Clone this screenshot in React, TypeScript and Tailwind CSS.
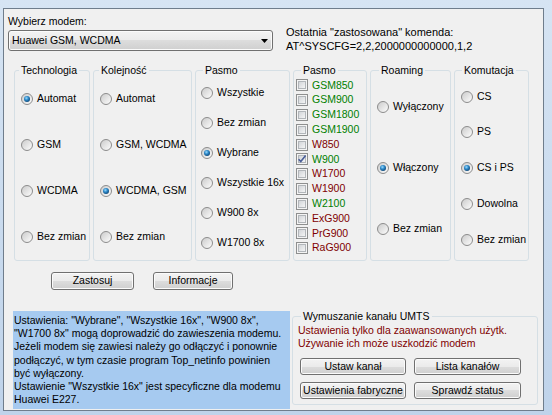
import { useId, type ReactNode } from "react";

function Radio({ checked }: { checked?: boolean }) {
  const id = useId().replace(/:/g, "");
  return (
    <svg width="12" height="12" viewBox="0 0 12 12" className="shrink-0">
      <defs>
        <linearGradient id={`f${id}`} x1="0" y1="0" x2="1" y2="1">
          <stop offset="0" stopColor="#c9c9c9" />
          <stop offset="1" stopColor="#ffffff" />
        </linearGradient>
        <radialGradient id={`d${id}`} cx="0.4" cy="0.35" r="0.75">
          <stop offset="0" stopColor="#9bdcff" />
          <stop offset="0.45" stopColor="#2a86c6" />
          <stop offset="1" stopColor="#0a3a66" />
        </radialGradient>
      </defs>
      <circle cx="6" cy="6" r="5.5" fill={`url(#f${id})`} stroke="#8c8c8c" />
      {checked && <circle cx="6" cy="6" r="3" fill={`url(#d${id})`} />}
    </svg>
  );
}

function Check({ checked }: { checked?: boolean }) {
  const id = useId().replace(/:/g, "");
  return (
    <svg width="12" height="12" viewBox="0 0 12 12" className="shrink-0">
      <defs>
        <linearGradient id={`c${id}`} x1="0" y1="0" x2="1" y2="1">
          <stop offset="0" stopColor="#cfd2d6" />
          <stop offset="1" stopColor="#f7f7f7" />
        </linearGradient>
      </defs>
      <rect x="0.5" y="0.5" width="11" height="11" fill="#f4f4f4" stroke="#8e8f8f" />
      <rect x="2.5" y="2.5" width="7" height="7" fill={`url(#c${id})`} stroke="#b2b6ba" />
      {checked && (
        <path d="M2.6 6.2 L4.8 8.6 L9.6 2.4" stroke="#4a5e98" strokeWidth="1.6" fill="none" />
      )}
    </svg>
  );
}

function Btn({ children, className = "" }: { children: ReactNode; className?: string }) {
  return (
    <div
      className={`flex items-center justify-center whitespace-nowrap rounded-[3px] border border-[#707070] bg-[linear-gradient(#f3f3f3,#ebebeb_50%,#dddddd_50%,#cfcfcf)] shadow-[inset_0_0_0_1px_#fbfbfb] ${className}`}
    >
      {children}
    </div>
  );
}

function Group({
  title,
  width,
  children,
  legendOffset = "ml-[5px]",
}: {
  title: string;
  width: string;
  children: ReactNode;
  legendOffset?: string;
}) {
  return (
    <fieldset className={`h-[197px] rounded-[3px] border border-[#d5dfe5] ${width}`}>
      <legend className={`px-[2px] leading-[13px] ${legendOffset}`}>{title}</legend>
      {children}
    </fieldset>
  );
}

function RadioRow({ label, checked }: { label: string; checked?: boolean }) {
  return (
    <div className="flex h-[13px] items-center gap-[4px] whitespace-nowrap">
      <Radio checked={checked} />
      <span>{label}</span>
    </div>
  );
}

const bands: [string, boolean, boolean][] = [
  ["GSM850", true, false],
  ["GSM900", true, false],
  ["GSM1800", true, false],
  ["GSM1900", true, false],
  ["W850", false, false],
  ["W900", true, true],
  ["W1700", false, false],
  ["W1900", false, false],
  ["W2100", true, false],
  ["ExG900", false, false],
  ["PrG900", false, false],
  ["RaG900", false, false],
];

export default function App() {
  return (
    <div className="flex h-[415px] w-[552px] bg-[linear-gradient(#d6e4f3,#bfd3ea)] pb-[4px] pl-[3px] pr-[8px] pt-[8px] font-['Liberation_Sans',Arial,sans-serif] text-[10.5px] text-black">
      <div className="flex flex-1 flex-col border border-[#6f7d8c] bg-[#f0f0f0]">
        {/* modem select + last command */}
        <div className="flex pl-[4px] pt-[6px]">
          <div className="flex flex-col">
            <div className="leading-[13px]">Wybierz modem:</div>
            <div className="mt-[2px] flex h-[21px] w-[265px] items-center justify-between rounded-[3px] border border-[#707070] bg-[linear-gradient(#f3f3f3,#ebebeb_50%,#dddddd_50%,#cfcfcf)] pl-[3px] pr-[4px] shadow-[inset_0_0_0_1px_#fbfbfb]">
              <span>Huawei GSM, WCDMA</span>
              <svg width="7" height="4" viewBox="0 0 7 4">
                <path d="M0 0 H7 L3.5 4 Z" fill="#000" />
              </svg>
            </div>
          </div>
          <div className="ml-[13px] pt-[11px] text-[11px] leading-[13.5px]">
            <div>Ostatnia "zastosowana" komenda:</div>
            <div>AT^SYSCFG=2,2,2000000000000,1,2</div>
          </div>
        </div>

        {/* option groups */}
        <div className="ml-[10px] mt-[11px] flex gap-[3px]">
          <Group title="Technologia" width="w-[76px]" legendOffset="ml-[4px]">
            <div className="flex flex-col gap-[33px] pl-[6px] pt-[15px]">
              <RadioRow label="Automat" checked />
              <RadioRow label="GSM" />
              <RadioRow label="WCDMA" />
              <RadioRow label="Bez zmian" />
            </div>
          </Group>
          <Group title="Kolejność" width="w-[99px]">
            <div className="flex flex-col gap-[33px] pl-[6px] pt-[15px]">
              <RadioRow label="Automat" />
              <RadioRow label="GSM, WCDMA" />
              <RadioRow label="WCDMA, GSM" checked />
              <RadioRow label="Bez zmian" />
            </div>
          </Group>
          <Group title="Pasmo" width="w-[95px]" legendOffset="ml-[7px]">
            <div className="flex flex-col gap-[17px] pl-[5px] pt-[9px]">
              <RadioRow label="Wszystkie" />
              <RadioRow label="Bez zmian" />
              <RadioRow label="Wybrane" checked />
              <RadioRow label="Wszystkie 16x" />
              <RadioRow label="W900 8x" />
              <RadioRow label="W1700 8x" />
            </div>
          </Group>
          <Group title="Pasmo" width="w-[74px]" legendOffset="ml-[7px]">
            <div className="flex flex-col pl-[2px] pt-[1px]">
              {bands.map(([name, green, checked]) => (
                <div key={name} className="flex h-[14.8px] items-center gap-[4px]">
                  <Check checked={checked} />
                  <span className={green ? "text-[#008000]" : "text-[#800000]"}>{name}</span>
                </div>
              ))}
            </div>
          </Group>
          <Group title="Roaming" width="w-[81px]" legendOffset="ml-[8px]">
            <div className="flex flex-col gap-[48px] pl-[6px] pt-[23px]">
              <RadioRow label="Wyłączony" />
              <RadioRow label="Włączony" checked />
              <RadioRow label="Bez zmian" />
            </div>
          </Group>
          <Group title="Komutacja" width="w-[75px]" legendOffset="ml-[7px]">
            <div className="flex flex-col gap-[22.75px] pl-[6px] pt-[13px]">
              <RadioRow label="CS" />
              <RadioRow label="PS" />
              <RadioRow label="CS i PS" checked />
              <RadioRow label="Dowolna" />
              <RadioRow label="Bez zmian" />
            </div>
          </Group>
        </div>

        {/* apply buttons */}
        <div className="ml-[47px] mt-[11px] flex gap-[19px]">
          <Btn className="h-[18px] w-[83px]">Zastosuj</Btn>
          <Btn className="h-[18px] w-[80px]">Informacje</Btn>
        </div>

        {/* info + UMTS */}
        <div className="mt-[20px] flex items-start">
          <div className="ml-[9px] mt-[1px] h-[98px] w-[277px] bg-[#a6caf0] pl-[1px] pt-[3px] leading-[13.2px] whitespace-nowrap">
            <div>Ustawienia: "Wybrane", "Wszystkie 16x", "W900 8x",</div>
            <div>"W1700 8x" mogą doprowadzić do zawieszenia modemu.</div>
            <div>Jeżeli modem się zawiesi należy go odłączyć i ponownie</div>
            <div>podłączyć, w tym czasie program Top_netinfo powinien</div>
            <div>być wyłączony.</div>
            <div>Ustawienie "Wszystkie 16x" jest specyficzne dla modemu</div>
            <div>Huawei E227.</div>
          </div>
          <fieldset className="ml-[2px] h-[95px] w-[246px] rounded-[3px] border border-[#d5dfe5]">
            <legend className="ml-[8px] px-[2px] leading-[13px]">Wymuszanie kanału UMTS</legend>
            <div className="flex flex-col pl-[5px] pt-[1px]">
              <div className="leading-[13px] text-[#800000]">
                <div>Ustawienia tylko dla zaawansowanych użytk.</div>
                <div>Używanie ich może uszkodzić modem</div>
              </div>
              <div className="ml-[2px] mt-[8px] grid grid-cols-[106px_107px] gap-x-[8px] gap-y-[7px]">
                <Btn className="h-[17px]">Ustaw kanał</Btn>
                <Btn className="h-[17px]">Lista kanałów</Btn>
                <Btn className="h-[17px]">Ustawienia fabryczne</Btn>
                <Btn className="h-[17px]">Sprawdź status</Btn>
              </div>
            </div>
          </fieldset>
        </div>
      </div>
    </div>
  );
}
